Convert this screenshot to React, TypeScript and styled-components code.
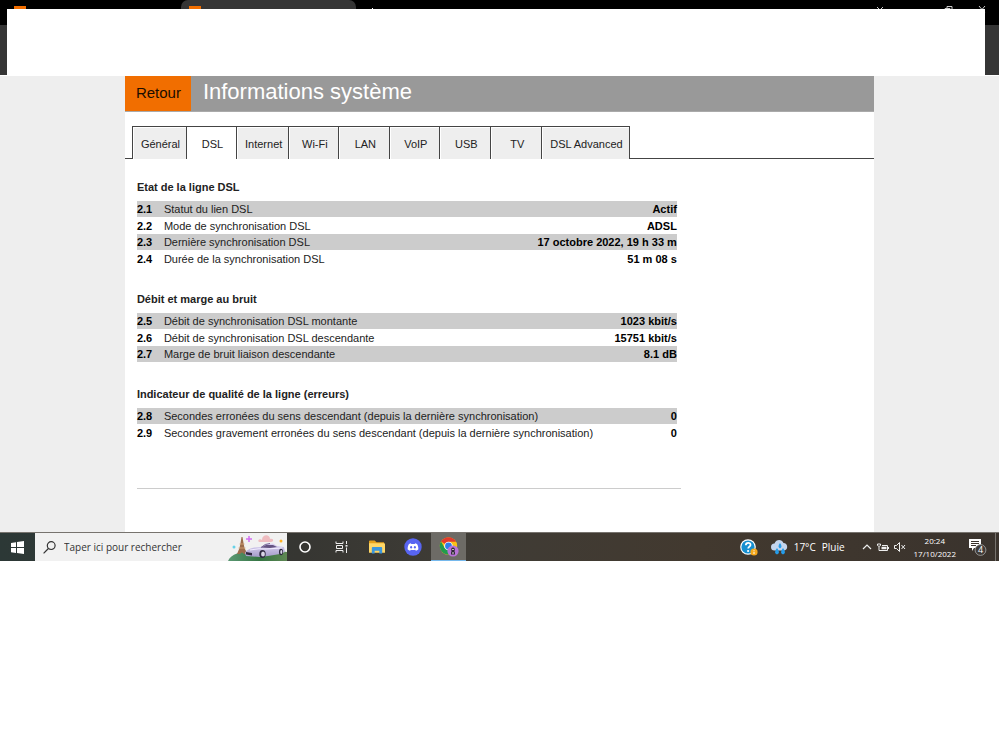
import React from "react";
import styled, { createGlobalStyle, css } from "styled-components";

const GlobalStyle = createGlobalStyle`
  *, *::before, *::after { box-sizing: border-box; }
  body { margin: 0; background: #fff; color: #222; font: 11px/16px "Liberation Sans", Arial, sans-serif; }
  button, input { font: inherit; color: inherit; margin: 0; padding: 0; border: 0; background: none; }
  a { color: inherit; text-decoration: none; }
  svg { display: block; flex: none; }
`;

/* ---------- browser frame ---------- */

const Browser = styled.header`
  position: relative;
  overflow: hidden;
  background: #353535;
  border-bottom: 1px solid #fff;
`;

const TabStrip = styled.div`
  display: flex;
  align-items: flex-start;
  height: 25px;
  padding-left: 14px;
  background: #000;
`;

const BrowserTab = styled.div<{ $active?: boolean }>`
  flex: 0 0 ${(p) => (p.$active ? "175px" : "167px")};
  height: 25px;
  padding: 6px ${(p) => (p.$active ? "8px" : "0")} 0;
  border-radius: 7px 7px 0 0;
  background: ${(p) => (p.$active ? "#353535" : "#000")};
`;

const Favicon = styled.div`
  width: 12px;
  height: 12px;
  background: #f16e00;
`;

const NewTab = styled.div`
  margin: 8px 0 0 16px;
`;

const WindowButtons = styled.div`
  display: flex;
  margin: 5px 13px 0 auto;
`;

const Toolbar = styled.div`
  height: 50px;
`;

const Cover = styled.div`
  position: absolute;
  inset: 9px 14px 0 7px;
  background: #fff;
`;

/* ---------- page ---------- */

const Page = styled.div`
  background: #eee;
`;

const Sheet = styled.main`
  width: 75%;
  margin: 0 auto;
  padding-bottom: 43px;
  background: #fff;
`;

const TitleBar = styled.div`
  display: flex;
  height: 36px;
  background: #999;
  border-bottom: 1px solid #aaa;
`;

const Back = styled.a`
  flex: none;
  padding: 0 10px 0 11px;
  background: #f16e00;
  color: #1a0d00;
  font-size: 15px;
  line-height: 34px;
`;

const Title = styled.h1`
  margin: 0 0 0 12px;
  color: #fff;
  font-size: 22px;
  font-weight: 400;
  line-height: 32px;
`;

const Tabs = styled.div`
  display: flex;
  margin-top: 14px;
  &::before, &::after { content: ""; border-bottom: 1px solid #444; }
  &::before { flex: 0 0 7px; }
  &::after { flex: 1; border-left: 1px solid #444; }
`;

const Tab = styled.button<{ $active?: boolean; $wide?: boolean }>`
  height: 33px;
  min-width: ${(p) => (p.$wide ? 51 : 50)}px;
  padding: 2px 6px 0 8px;
  border-top: 1px solid #444;
  border-left: 1px solid #444;
  background: ${(p) => (p.$active ? "#fff" : "#eee")};
  box-shadow: inset 1px 1px #fff;
  white-space: nowrap;
`;

const Content = styled.div`
  max-width: 556px;
  padding: 18px 0 0 12px;
`;

const Section = styled.section`
  margin-bottom: 22px;
  padding-right: 4px;
`;

const Heading = styled.h2`
  margin: 0 0 4px;
  font-size: 11px;
  line-height: 20px;
`;

const DataTable = styled.table`
  width: 100%;
  border-collapse: collapse;
  line-height: 16px;
  th, td { padding: 0; text-align: left; font-weight: 400; }
`;

const Row = styled.tr`
  height: 17px;
  &:nth-child(odd) { height: 16px; background: #ccc; }
`;

const Num = styled.td`
  && { width: 27px; font-weight: 700; color: #000; }
`;

const Value = styled.td`
  && { text-align: right; font-weight: 700; color: #000; }
`;

const Rule = styled.hr`
  margin: 47px 0 0;
  border: 0;
  border-top: 1px solid #ccc;
`;

/* ---------- taskbar ---------- */

const Taskbar = styled.footer`
  display: flex;
  align-items: stretch;
  height: 29px;
  background: linear-gradient(90deg, #2c3836 0, #363632 30%, #3f3c36 46%, #42392f 70%, #3a332d 100%);
  border-top: 1px solid #77736e;
  color: #fff;
  font-family: "Open Sans", "Noto Sans", sans-serif;
`;

const TaskButton = styled.button<{ $active?: boolean }>`
  display: flex;
  flex: 0 0 36px;
  align-items: center;
  justify-content: center;
  ${(p) =>
    p.$active &&
    css`
      flex-basis: 35px;
      background: #6d6b66;
      border-bottom: 1px solid #76b9ed;
    `}
`;

const Start = styled(TaskButton)`
  flex-basis: 35px;
`;

const Search = styled.label`
  display: flex;
  flex: 0 0 252px;
  align-items: center;
  gap: 8px;
  padding-left: 8px;
  background: #f1f1f1;
  color: #333;
  font-size: 10px;
`;

const SearchInput = styled.input`
  flex: 1;
  min-width: 0;
  outline: 0;
  &::placeholder { color: #333; opacity: 1; }
`;

const Tray = styled.div`
  display: flex;
  align-items: center;
  gap: 5px;
  margin-left: auto;
`;

const Weather = styled.button`
  display: flex;
  align-items: center;
  gap: 6px;
  margin: 0 12px 0 8px;
  font-size: 10px;
`;

const Clock = styled.time`
  padding: 0 7px 0 3px;
  font-size: 8px;
  line-height: 13px;
  text-align: center;
`;

const TrayButton = styled.button`
  display: flex;
`;

const ShowDesktop = styled.button`
  width: 4px;
  height: 100%;
  margin-left: 3px;
  border-left: 1px solid #77736e;
`;

/* ---------- drawings ---------- */

const WindowsLogo = () => (
  <svg width="13" height="13" viewBox="0 0 13 13" fill="#fff">
    <path d="M0 2l5-.8V6H0zM6 1l7-1v6H6zM0 7h5v5l-5-.8zM6 7h7v6l-7-1z" />
  </svg>
);

const SearchIcon = () => (
  <svg width="13" height="13" viewBox="0 0 13 13" fill="none" stroke="#333" strokeWidth="1.2">
    <circle cx="8.2" cy="4.6" r="3.9" />
    <path d="M5.4 7.5L.6 12.4" />
  </svg>
);

const ParisArt = () => (
  <svg width="59" height="28" viewBox="0 0 59 28">
    <defs>
      <linearGradient id="hill" x1="0" x2="1"><stop stopColor="#5b9873" /><stop offset=".55" stopColor="#347442" /><stop offset="1" stopColor="#5f8754" /></linearGradient>
      <linearGradient id="car" x1="0" x2="0" y1="0" y2="1"><stop stopColor="#ddd6f5" /><stop offset="1" stopColor="#a49bc9" /></linearGradient>
    </defs>
    <path d="M0 28C3 21 13 18 24 18c14 0 25-1 35 1v9z" fill="url(#hill)" />
    <path d="M13.500 4h1l1 6 1 5 3 6h-3.500q-2-3-4 0H9l2.500-6 1-5z" fill="#9b6c4c" />
    <path d="M11.500 11h5M10.500 15h7" stroke="#d6a778" strokeWidth=".8" />
    <path d="M21 3v6M18 6h6" stroke="#d26ef2" strokeWidth="1.500" />
    <path d="M31 9c-2-2 1-4 3-2 0-6 8-6 8-1 4-1 4 3 1 3z" fill="#efbcc0" />
    <circle cx="53" cy="8" r="1.500" fill="#ffb224" /><circle cx="6" cy="14" r="1.500" fill="#67d2e8" />
    <path d="M17 20c2-4 8-6 16-6l5-3 7-.5 4 2.500 7 1 1 5-5 2-12 2-8 1-14-1z" fill="url(#car)" />
    <path d="M33 14.500l5-2.500 7 0 4 2-7 1z" fill="#655482" />
    <path d="M33 14.500q4-4 9-4" fill="none" stroke="#746195" />
    <path d="M18 19l6 1v2.500l-6-1z" fill="#302840" />
    <path d="M22 17q10-2 16-1l16-1" fill="none" stroke="#f2edff" />
    <ellipse cx="34.500" cy="21" rx="3.200" ry="4" fill="#2e2941" /><ellipse cx="35" cy="21" rx="1.900" ry="2.600" fill="#d8d5e6" />
    <ellipse cx="53" cy="19" rx="2" ry="3.200" fill="#2e2941" /><ellipse cx="53.300" cy="19" rx="1" ry="2" fill="#d8d5e6" />
  </svg>
);

const CortanaIcon = () => (
  <svg width="12" height="12" viewBox="0 0 12 12"><circle cx="6" cy="6" r="5" fill="none" stroke="#fff" strokeWidth="1.600" /></svg>
);

const TaskViewIcon = () => (
  <svg width="13" height="12" viewBox="0 0 13 12" fill="none" stroke="#eee">
    <path d="M1 .5v2h7v-2M1.500 4.500h6v3h-6zM1 11.500v-2h7v2M11.500 0v3M11.500 6.500V12" /><path d="M10.500 4.800h2" strokeWidth="1.600" />
  </svg>
);

const FolderIcon = () => (
  <svg width="16" height="14" viewBox="0 0 17 14">
    <path d="M0 1q0-1 1-1h5l2 2h8v3H0z" fill="#e6a21c" /><path d="M0 3h16q1 0 1 1v9H0z" fill="#ffd766" />
    <path d="M3 8q0-1 1-1h9q1 0 1 1v6h-3v-3H6v3H3z" fill="#3b96dc" />
  </svg>
);

const DiscordIcon = () => (
  <svg width="18" height="18" viewBox="0 0 18 18">
    <circle cx="9" cy="9" r="8.700" fill="#5865f2" />
    <path d="M6.800 5.300L5 6C3.900 7.700 3.500 9.500 3.700 11.600c.8.6 1.600 1 2.400 1.200l.7-1.100c1.500.4 2.900.4 4.400 0l.7 1.100c.8-.2 1.600-.6 2.400-1.200.2-2.100-.2-3.900-1.300-5.600l-1.800-.7-.5.8H7.300z" fill="#fff" />
    <ellipse cx="7.100" cy="9.300" rx="1" ry="1.200" fill="#5865f2" /><ellipse cx="10.900" cy="9.300" rx="1" ry="1.200" fill="#5865f2" />
  </svg>
);

const ChromeIcon = () => (
  <svg width="20" height="20" viewBox="0 0 20 20">
    <circle cx="9.500" cy="9" r="8.700" fill="#fbc116" />
    <path d="M9.500 9L2 4.600A8.700 8.700 0 0 1 17 4.700H9.500z" fill="#e33b2e" />
    <path d="M2 4.600A8.700 8.700 0 0 0 9.500 17.700L13.200 11.200 5.700 11z" fill="#229b4c" />
    <circle cx="9.500" cy="9" r="4.300" fill="#fff" /><circle cx="9.500" cy="9" r="3.400" fill="#2f7de9" />
    <circle cx="14" cy="14" r="5.600" fill="#b873d8" />
    <path d="M12 17.500v-2l.5-1q-1-4 1.500-4t1.500 4l.5 1v2z" fill="#302938" /><path d="M13.200 12h1.600v1h-1.600zM13.500 15h1v2h-1z" fill="#ddd" />
  </svg>
);

const HelpIcon = () => (
  <svg width="18" height="17" viewBox="0 0 18 17">
    <circle cx="8" cy="8" r="7.800" fill="#fff" /><circle cx="8" cy="8" r="6.600" fill="#168fd0" />
    <path d="M5.800 6.300c0-3.400 5-3.100 4.700-.3-.2 1.700-2.300 1.700-2.300 3.600" fill="none" stroke="#fff" strokeWidth="1.800" /><circle cx="8.100" cy="12" r="1.100" fill="#fff" />
    <circle cx="14" cy="13" r="3.600" fill="#f6a81b" /><path d="M14 11v.8M14 12.700V15" stroke="#fff" />
  </svg>
);

const RainIcon = () => (
  <svg width="17" height="15" viewBox="0 0 17 15">
    <path d="M3.500 10.500a3.500 3.500 0 0 1 0-7C5-1 11-1 12.500 3a3.800 3.800 0 0 1 .7 7.500z" fill="#c3d5ee" />
    <path d="M9 3q3 4 0 5.500-3-1.500 0-5.500zM6 8q4 5 0 6.500-4-1.500 0-6.500zM12 8q4 5 0 6.500-4-1.500 0-6.500z" fill="#259ce9" />
  </svg>
);

const UpIcon = () => (
  <svg width="10" height="6" viewBox="0 0 10 6" fill="none" stroke="#eee" strokeWidth="1.200"><path d="M1 5l4-4 4 4" /></svg>
);

const BatteryIcon = () => (
  <svg width="12" height="9" viewBox="0 0 12 9" fill="none" stroke="#eee">
    <path d="M.5 1h3v1.500q-1.500 2-3 0zM2 4v3.500h8.500v-5H5M11.500 4v2" /><path d="M4.500 5h5" strokeWidth="2.500" />
  </svg>
);

const MuteIcon = () => (
  <svg width="12" height="10" viewBox="0 0 12 10" fill="none" stroke="#eee"><path d="M.5 3.500h2l3-3v9l-3-3h-2zM7.500 3l3.500 4M11 3L7.500 7" /></svg>
);

const NoticeIcon = () => (
  <svg width="19" height="18" viewBox="0 0 19 18">
    <path d="M1 1h12v9H6l-2 3v-3H1z" fill="#fff" /><path d="M3 3.500h8M3 5.500h8M3 7.500h5" stroke="#3a332d" />
    <circle cx="12.500" cy="12" r="5.400" fill="#3f3b38" stroke="#aaa" strokeWidth=".8" />
    <text x="12.500" y="15" textAnchor="middle" fill="#fff" fontSize="9">4</text>
  </svg>
);

/* ---------- data ---------- */

const tabs = [
  { label: "Général" },
  { label: "DSL", active: true },
  { label: "Internet" },
  { label: "Wi-Fi" },
  { label: "LAN", wide: true },
  { label: "VoIP" },
  { label: "USB", wide: true },
  { label: "TV", wide: true },
  { label: "DSL Advanced" },
];

const sections = [
  {
    title: "Etat de la ligne DSL",
    rows: [
      ["2.1", "Statut du lien DSL", "Actif"],
      ["2.2", "Mode de synchronisation DSL", "ADSL"],
      ["2.3", "Dernière synchronisation DSL", "17 octobre 2022, 19 h 33 m"],
      ["2.4", "Durée de la synchronisation DSL", "51 m 08 s"],
    ],
  },
  {
    title: "Débit et marge au bruit",
    rows: [
      ["2.5", "Débit de synchronisation DSL montante", "1023 kbit/s"],
      ["2.6", "Débit de synchronisation DSL descendante", "15751 kbit/s"],
      ["2.7", "Marge de bruit liaison descendante", "8.1 dB"],
    ],
  },
  {
    title: "Indicateur de qualité de la ligne (erreurs)",
    rows: [
      ["2.8", "Secondes erronées du sens descendant (depuis la dernière synchronisation)", "0"],
      ["2.9", "Secondes gravement erronées du sens descendant (depuis la dernière synchronisation)", "0"],
    ],
  },
];

export default function App() {
  return (
    <>
      <GlobalStyle />
      <Browser>
        <TabStrip>
          <BrowserTab><Favicon /></BrowserTab>
          <BrowserTab $active><Favicon /></BrowserTab>
          <NewTab><svg width="1" height="8"><path d="M.5 0v8" stroke="#fff" /></svg></NewTab>
          <WindowButtons>
            <svg width="110" height="10" viewBox="0 0 110 10" fill="none" stroke="#ccc">
              <path d="M1 2l3 3 3-3M71 3.500V1.500h5v5M69 3.500h5v5h-5zM103 1l6 7M109 1l-6 7" />
            </svg>
          </WindowButtons>
        </TabStrip>
        <Toolbar />
        <Cover />
      </Browser>
      <Page>
        <Sheet>
          <TitleBar>
            <Back href="#retour">Retour</Back>
            <Title>Informations système</Title>
          </TitleBar>
          <Tabs role="tablist">
            {tabs.map((t) => (
              <Tab key={t.label} type="button" role="tab" aria-selected={!!t.active} $active={t.active} $wide={t.wide}>
                {t.label}
              </Tab>
            ))}
          </Tabs>
          <Content>
            {sections.map((s) => (
              <Section key={s.title}>
                <Heading>{s.title}</Heading>
                <DataTable aria-label={s.title}>
                  <tbody>
                    {s.rows.map(([num, label, value]) => (
                      <Row key={num}>
                        <Num>{num}</Num>
                        <th scope="row">{label}</th>
                        <Value>{value}</Value>
                      </Row>
                    ))}
                  </tbody>
                </DataTable>
              </Section>
            ))}
            <Rule />
          </Content>
        </Sheet>
      </Page>
      <Taskbar>
        <Start type="button" aria-label="Démarrer"><WindowsLogo /></Start>
        <Search>
          <SearchIcon />
          <SearchInput type="text" placeholder="Taper ici pour rechercher" aria-label="Taper ici pour rechercher" />
          <ParisArt />
        </Search>
        <TaskButton type="button" aria-label="Cortana"><CortanaIcon /></TaskButton>
        <TaskButton type="button" aria-label="Applications actives"><TaskViewIcon /></TaskButton>
        <TaskButton type="button" aria-label="Explorateur"><FolderIcon /></TaskButton>
        <TaskButton type="button" aria-label="Discord"><DiscordIcon /></TaskButton>
        <TaskButton type="button" aria-label="Chrome" $active><ChromeIcon /></TaskButton>
        <Tray>
          <TrayButton type="button" aria-label="Aide"><HelpIcon /></TrayButton>
          <Weather type="button"><RainIcon /><span>17°C</span><span>Pluie</span></Weather>
          <TrayButton type="button" aria-label="Icônes cachées"><UpIcon /></TrayButton>
          <TrayButton type="button" aria-label="Batterie"><BatteryIcon /></TrayButton>
          <TrayButton type="button" aria-label="Son"><MuteIcon /></TrayButton>
          <Clock>20:24<br />17/10/2022</Clock>
          <TrayButton type="button" aria-label="Notifications"><NoticeIcon /></TrayButton>
          <ShowDesktop type="button" aria-label="Bureau" />
        </Tray>
      </Taskbar>
    </>
  );
}
